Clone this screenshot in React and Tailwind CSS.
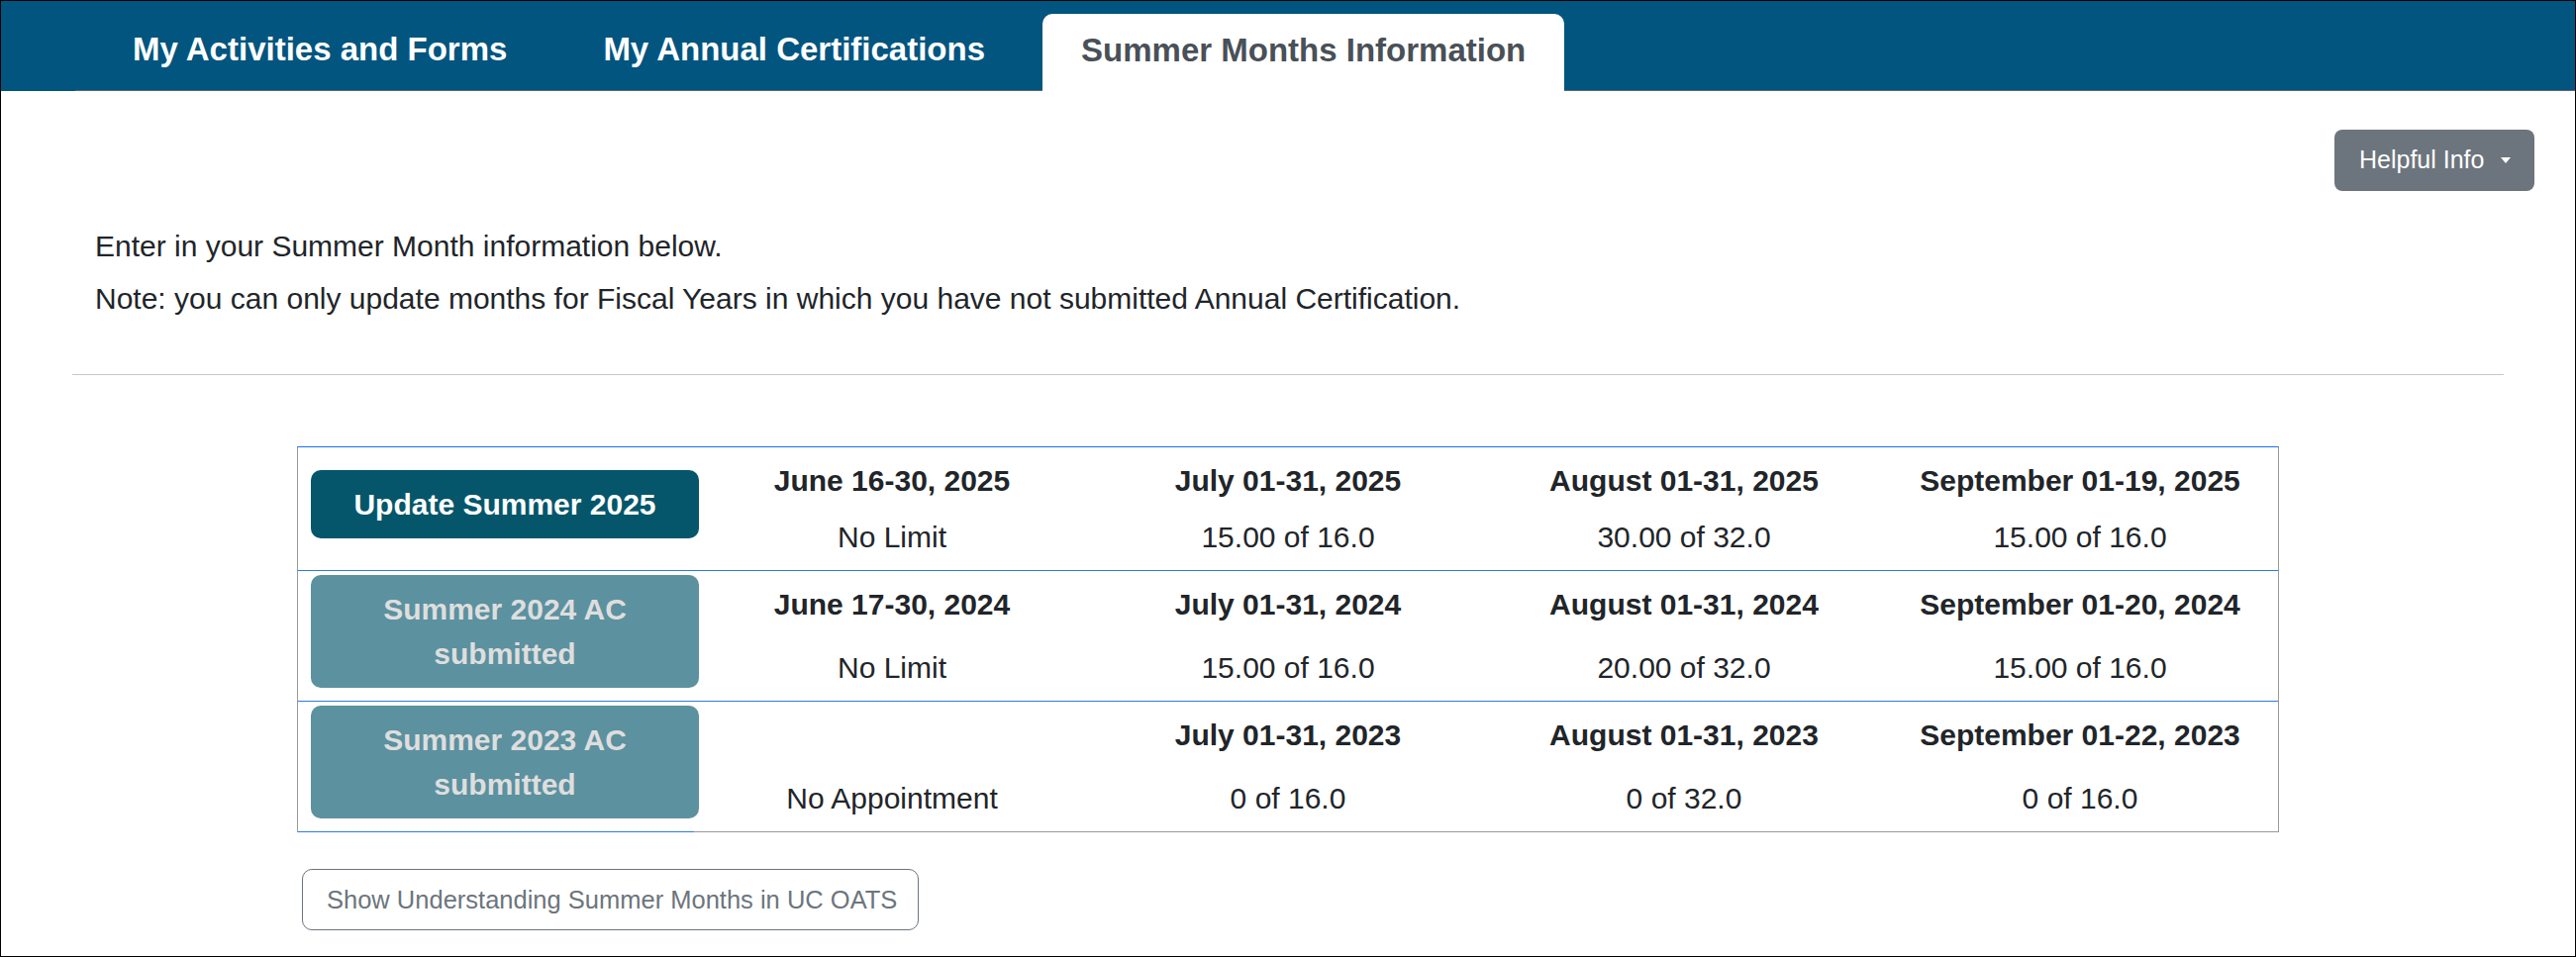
const tabs = [
    { label: "My Activities and Forms", active: false },
    { label: "My Annual Certifications", active: false },
    { label: "Summer Months Information", active: true },
];

const summers = [
    {
        button: "Update Summer 2025",
        enabled: true,
        months: [
            { title: "June 16-30, 2025", value: "No Limit" },
            { title: "July 01-31, 2025", value: "15.00 of 16.0" },
            { title: "August 01-31, 2025", value: "30.00 of 32.0" },
            { title: "September 01-19, 2025", value: "15.00 of 16.0" },
        ],
    },
    {
        button: "Summer 2024 AC submitted",
        enabled: false,
        months: [
            { title: "June 17-30, 2024", value: "No Limit" },
            { title: "July 01-31, 2024", value: "15.00 of 16.0" },
            { title: "August 01-31, 2024", value: "20.00 of 32.0" },
            { title: "September 01-20, 2024", value: "15.00 of 16.0" },
        ],
    },
    {
        button: "Summer 2023 AC submitted",
        enabled: false,
        months: [
            { title: "", value: "No Appointment" },
            { title: "July 01-31, 2023", value: "0 of 16.0" },
            { title: "August 01-31, 2023", value: "0 of 32.0" },
            { title: "September 01-22, 2023", value: "0 of 16.0" },
        ],
    },
];

function SummerRow({ row, last }) {
    return (
        <div className={`grid grid-cols-[400px_400px_400px_400px_400px] ${last ? "" : "border-b border-[#2d7be0]"}`}>
            {/* Button cell */}
            <div className={`flex items-center pl-[13px] py-[4px] ${last ? "border-b border-[#2d7be0]" : ""}`}>
                <button
                    className={`w-[392px] shrink-0 mb-[9px] rounded-[10px] py-[12px] px-[20px] text-[30px] leading-[45px] font-bold text-center ${
                        row.enabled ? "bg-[#05566b] text-white" : "bg-[#5c919f] text-[#dedede]"
                    }`}
                >
                    {row.button}
                </button>
            </div>

            {/* Month cells */}
            {row.months.map((m, i) => (
                <div
                    key={i}
                    className={`flex flex-col justify-between items-center text-center py-[11px] text-[30px] leading-[45px] ${
                        last ? "border-b border-[#999]" : ""
                    }`}
                >
                    <div className="font-bold mb-[12px] h-[45px]">{m.title}</div>
                    <div>{m.value}</div>
                </div>
            ))}
        </div>
    );
}

export default function App() {
    return (
        <div className="w-[2602px] h-[967px] overflow-hidden border border-black bg-white text-[#212529] font-['Liberation_Sans',Arial,sans-serif]">
            {/* Tabs */}
            <div className="h-[91px] bg-[#02557f] flex items-end pl-[75px]">
                <div className="flex-1 flex items-end gap-[19px] pl-[19px] border-b border-[#666]">
                    {tabs.map((t) =>
                        t.active ? (
                            <div
                                key={t.label}
                                className="h-[78px] -mb-px px-[39px] pb-[5px] flex items-center bg-white rounded-t-[10px] text-[33px] font-bold text-[#495057] whitespace-nowrap"
                            >
                                {t.label}
                            </div>
                        ) : (
                            <div
                                key={t.label}
                                className="h-[77px] px-[39px] pb-[5px] flex items-center text-[33px] font-bold text-white whitespace-nowrap"
                            >
                                {t.label}
                            </div>
                        )
                    )}
                </div>
            </div>

            {/* Helpful Info */}
            <div className="flex justify-end mt-[39px] pr-[41px]">
                <button className="h-[62px] w-[202px] rounded-[8px] bg-[#6c757d] text-white text-[25px] flex items-center pl-[25px] gap-[17px]">
                    <span>Helpful Info</span>
                    <span className="w-0 h-0 border-x-[5px] border-x-transparent border-t-[6px] border-t-white"></span>
                </button>
            </div>

            {/* Intro */}
            <div className="pl-[95px] text-[30px] leading-[45px]">
                <p className="mt-[33px]">Enter in your Summer Month information below.</p>
                <p className="mt-[8px]">
                    Note: you can only update months for Fiscal Years in which you have not submitted Annual Certification.
                </p>
            </div>

            <div className="mx-[72px] mt-[54px] border-t border-[#c8c8c8]"></div>

            {/* Summer table */}
            <div className="ml-[299px] mt-[72px] w-[2002px] border-x border-t border-[#999] border-t-[#1e6ff0]">
                {summers.map((row, i) => (
                    <SummerRow key={i} row={row} last={i === summers.length - 1} />
                ))}
            </div>

            <button className="ml-[304px] mt-[37px] h-[62px] w-[623px] rounded-[10px] border border-[#6c757d] text-[#6c757d] text-[25.5px] text-left pl-[24px]">
                Show Understanding Summer Months in UC OATS
            </button>
        </div>
    );
}
